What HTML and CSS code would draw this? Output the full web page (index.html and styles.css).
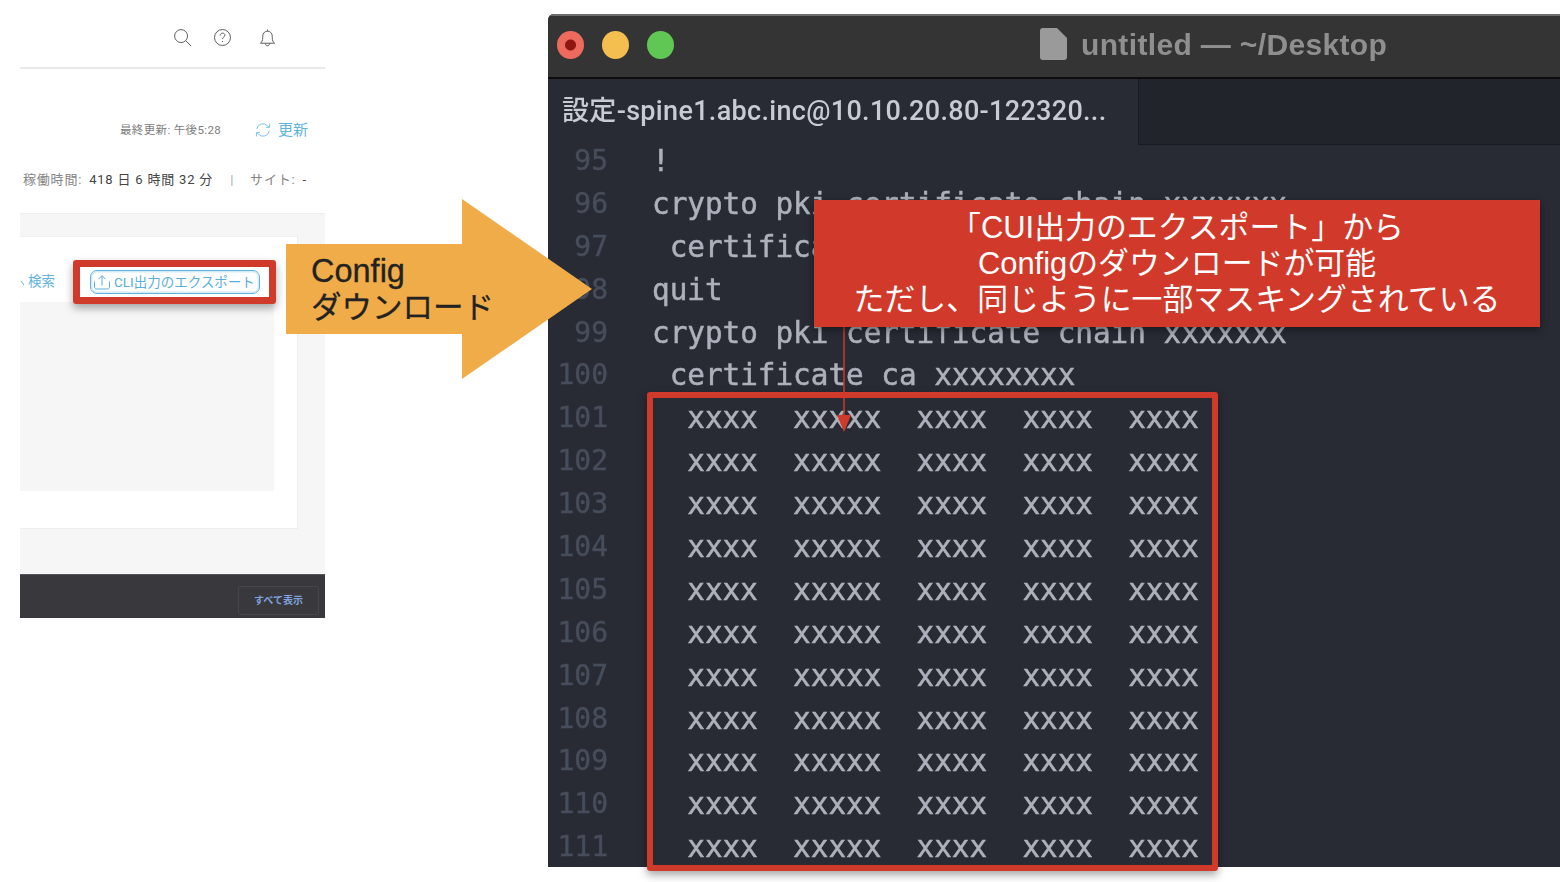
FILE: index.html
```html
<!DOCTYPE html>
<html lang="ja">
<head>
<meta charset="utf-8">
<title>Config ダウンロード</title>
<link rel="stylesheet" href="styles.css">
</head>
<body>
<main class="slide">
  <section class="panel">
    <header class="topbar">
      <svg class="ico ico-search" viewBox="0 0 20 20"><circle cx="8.5" cy="8.5" r="6.8"/><path d="M13.5 13.5 19 19"/></svg>
      <svg class="ico ico-help" viewBox="0 0 20 20"><circle cx="10" cy="10" r="8.4"/><path d="M7.6 8c0-1.6 1.1-2.6 2.5-2.6s2.4 1 2.4 2.2c0 1.9-2.5 2-2.5 4"/><path d="M10 13.6v1.2"/></svg>
      <svg class="ico ico-bell" viewBox="0 0 20 20"><path d="M2.5 15.5c1.7-1.4 2.5-3 2.5-5.6V8.2C5 5 7.2 2.8 10 2.8s5 2.2 5 5.4v1.7c0 2.6.8 4.2 2.5 5.6z"/><path d="M10 1v1.8M7.8 15.8c0 1.4 1 2.4 2.2 2.4s2.2-1 2.2-2.4"/></svg>
    </header>
    <div class="updated">
      <span class="updated-time">最終更新: 午後5:28</span>
      <span class="refresh">
        <svg class="ico-refresh" viewBox="0 0 18 18"><path d="M2 8a7 7 0 0 1 12.2-3.6L16 6"/><path d="M16.4 1.8V6h-4.2"/><path d="M16 10a7 7 0 0 1-12.2 3.6L2 12"/><path d="M1.6 16.2V12h4.2"/></svg>更新
      </span>
    </div>
    <div class="uptime">
      <span class="muted">稼働時間:</span><span class="val">418 日 6 時間 32 分</span><span class="sep">|</span><span class="muted">サイト:</span><span class="val">-</span>
    </div>
    <div class="content">
      <div class="card">
        <div class="toolbar">
          <span class="search"><svg class="ico-mini" viewBox="0 0 6 12"><path d="M0 6 3 10"/></svg>検索</span>
          <span class="export">
            <svg class="ico-upload" viewBox="0 0 18 18"><path d="M1.5 8.5v5.5c0 1.2.8 2 2 2h11c1.2 0 2-.8 2-2V8.5"/><path d="M9 12.5V3M5.5 6.2 9 2.6l3.5 3.6"/></svg>CLI出力のエクスポート
          </span>
        </div>
        <div class="card-body"></div>
      </div>
    </div>
    <footer class="bottom"><span class="show-all">すべて表示</span></footer>
  </section>

  <section class="terminal">
    <header class="titlebar">
      <span class="light red"></span><span class="light yellow"></span><span class="light green"></span>
      <div class="title">
        <svg class="doc" viewBox="0 0 27 32"><path d="M3 0h14l10 10v19a3 3 0 0 1-3 3H3a3 3 0 0 1-3-3V3a3 3 0 0 1 3-3z"/></svg>
        <span>untitled — ~/Desktop</span>
      </div>
    </header>
    <div class="tabs">
      <div class="tab">設定-spine1.abc.inc@10.10.20.80-122320...</div>
      <div class="tab-rest"></div>
    </div>
    <div class="editor">
      <div class="line"><span class="no">95</span><span class="code">!</span></div>
      <div class="line"><span class="no">96</span><span class="code">crypto pki certificate chain xxxxxxx</span></div>
      <div class="line"><span class="no">97</span><span class="code"> certificate ca xxxxxxxx</span></div>
      <div class="line"><span class="no">98</span><span class="code">quit</span></div>
      <div class="line"><span class="no">99</span><span class="code">crypto pki certificate chain xxxxxxx</span></div>
      <div class="line"><span class="no">100</span><span class="code"> certificate ca xxxxxxxx</span></div>
      <div class="line"><span class="no">101</span><span class="code">  xxxx  xxxxx  xxxx  xxxx  xxxx</span></div>
      <div class="line"><span class="no">102</span><span class="code">  xxxx  xxxxx  xxxx  xxxx  xxxx</span></div>
      <div class="line"><span class="no">103</span><span class="code">  xxxx  xxxxx  xxxx  xxxx  xxxx</span></div>
      <div class="line"><span class="no">104</span><span class="code">  xxxx  xxxxx  xxxx  xxxx  xxxx</span></div>
      <div class="line"><span class="no">105</span><span class="code">  xxxx  xxxxx  xxxx  xxxx  xxxx</span></div>
      <div class="line"><span class="no">106</span><span class="code">  xxxx  xxxxx  xxxx  xxxx  xxxx</span></div>
      <div class="line"><span class="no">107</span><span class="code">  xxxx  xxxxx  xxxx  xxxx  xxxx</span></div>
      <div class="line"><span class="no">108</span><span class="code">  xxxx  xxxxx  xxxx  xxxx  xxxx</span></div>
      <div class="line"><span class="no">109</span><span class="code">  xxxx  xxxxx  xxxx  xxxx  xxxx</span></div>
      <div class="line"><span class="no">110</span><span class="code">  xxxx  xxxxx  xxxx  xxxx  xxxx</span></div>
      <div class="line"><span class="no">111</span><span class="code">  xxxx  xxxxx  xxxx  xxxx  xxxx</span></div>
    </div>
  </section>

  <div class="hl hl-small"></div>
  <div class="hl hl-big"></div>

  <svg class="connector" viewBox="0 0 16 106"><path class="connector-line" d="M8 0V92"/><path class="connector-head" d="M1 88H15L8 105z"/></svg>

  <div class="arrow">
    <svg class="arrow-shape" viewBox="0 0 306 180"><path d="M0 45H176V0L306 90 176 180V135H0z"/></svg>
    <div class="arrow-text"><span class="arrow-latin">Config</span><br>ダウンロード</div>
  </div>

  <div class="callout">「CUI出力のエクスポート」から<br>Configのダウンロードが可能<br>ただし、同じように一部マスキングされている</div>
</main>
</body>
</html>
```

FILE: styles.css
```css
* { box-sizing: border-box; }
html, body { margin: 0; padding: 0; background: #fff; }
.slide {
  position: relative;
  width: 1560px;
  height: 882px;
  overflow: hidden;
  font-family: "Liberation Sans", "Noto Sans CJK JP", sans-serif;
}

/* left panel */
.panel {
  position: absolute;
  left: 20px;
  top: 0;
  width: 305px;
  height: 618px;
  display: flex;
  flex-direction: column;
  font-family: "Roboto", "Noto Sans CJK JP", sans-serif;
  color: #555;
}
.topbar {
  height: 69px;
  flex: none;
  border-bottom: 2px solid #e9e9e9;
  display: flex;
  align-items: flex-start;
  padding: 28px 0 0 153px;
}
.ico { fill: none; stroke: #555; stroke-width: 1; }
.ico-search { width: 19px; height: 19px; }
.ico-help { width: 19px; height: 19px; margin-left: 21px; }
.ico-bell { width: 19px; height: 20px; margin-left: 26px; }
.updated {
  height: 43px;
  margin-top: 50px;
  flex: none;
  display: flex;
  align-items: flex-start;
  padding-left: 100px;
  line-height: 22px;
}
.updated-time { font-size: 11.5px; color: #7d7d7d; letter-spacing: 0.35px; }
.refresh {
  display: flex;
  align-items: center;
  margin-left: 34px;
  font-size: 15px;
  color: #62b4dc;
  gap: 7px;
}
.ico-refresh { width: 16px; height: 16px; fill: none; stroke: #7cc2e4; stroke-width: 1.1; }
.uptime {
  flex: none;
  height: 51px;
  padding: 6px 0 0 3px;
  display: flex;
  font-size: 13px;
  line-height: 24px;
  letter-spacing: 0.8px;
}
.muted { color: #858585; }
.val { color: #444; margin-left: 7px; }
.sep { color: #aaa; margin: 0 16px 0 17px; }
.content {
  flex: 1;
  background: #f6f6f6;
  border-top: 1px solid #eee;
  padding: 22px 27px 0 0;
}
.card {
  height: 293px;
  background: #fff;
  border: 1px solid #eee;
  border-left: 0;
  padding-right: 23px;
}
.toolbar {
  height: 65px;
  display: flex;
  align-items: flex-start;
  padding-top: 34px;
  position: relative;
}
.search {
  display: flex;
  align-items: center;
  font-size: 13.5px;
  line-height: 20px;
  color: #62b4dc;
}
.ico-mini { width: 8px; height: 12px; fill: none; stroke: #62b4dc; stroke-width: 1; }
.export {
  display: flex;
  align-items: center;
  width: 170px;
  height: 24px;
  margin: -1px 0 0 35px;
  border: 1px solid #62b4dc;
  border-radius: 7px;
  box-shadow: inset 0 0 0 1.5px #d5ebf5;
  padding: 0 0 2px 2px;
  font-size: 13.5px;
  color: #5aaed8;
  white-space: nowrap;
}
.ico-upload { width: 18px; height: 18px; margin: 2px 3px 0 0; fill: none; stroke: #5aaed8; stroke-width: 1; flex: none; }
.card-body { height: 189px; background: #f6f6f6; }
.bottom {
  flex: none;
  height: 44px;
  background: #39383c;
  border-top: 1px solid #55555a;
  display: flex;
  justify-content: flex-end;
  padding: 11px 6px 0 0;
}
.show-all {
  width: 81px;
  height: 29px;
  border: 1px solid #45474d;
  border-radius: 3px;
  text-align: center;
  line-height: 27px;
  font-size: 10px;
  font-weight: 700;
  color: #7fa2dc;
}

/* terminal */
.terminal {
  position: absolute;
  left: 548px;
  top: 14px;
  width: 1012px;
  height: 853px;
  background: #282b34;
  border-top-left-radius: 6px;
  overflow: hidden;
  display: flex;
  flex-direction: column;
}
.titlebar {
  position: relative;
  flex: none;
  height: 65px;
  background: #343434;
  border-top: 2px solid #6e6e6e;
  border-bottom: 2px solid #0c0c0c;
  display: flex;
  align-items: center;
  padding: 0 0 3px 9px;
  gap: 18px;
}
.light { width: 27px; height: 28px; border-radius: 50%; flex: none; display: flex; }
.red { background: radial-gradient(circle, #8e1712 0 5px, #ec6a5e 6px); }
.yellow { background: #f4bf4f; }
.green { background: #60c654; }
.title {
  position: absolute;
  left: 492px;
  top: 11px;
  display: flex;
  align-items: center;
  gap: 14px;
  font-size: 30px;
  font-weight: 700;
  line-height: 34px;
  letter-spacing: 0.35px;
  color: #8f8f8f;
  filter: blur(0.6px);
}
.title span { position: relative; top: 1px; }
.doc { width: 27px; height: 32px; fill: #9a9a9a; }
.tabs { flex: none; height: 66px; display: flex; margin-bottom: -5px; }
.tab {
  width: 590px;
  padding: 15px 0 0 14px;
  font-family: "Roboto", "Noto Sans CJK JP", sans-serif;
  font-size: 27px;
  font-weight: 500;
  line-height: 34px;
  letter-spacing: 0.32px;
  color: #c8cbd2;
  white-space: nowrap;
  filter: blur(0.5px);
}
.tab-rest { flex: 1; background: #21242b; border-left: 1px solid #181a1f; border-bottom: 1px solid #181a1f; }
.editor {
  flex: 1;
  font-family: "DejaVu Sans Mono", monospace;
  filter: blur(0.7px);
}
.line { display: flex; height: 42.9px; line-height: 42.9px; white-space: pre; }
.no { width: 60px; text-align: right; font-size: 28px; color: #474d5b; flex: none; -webkit-text-stroke: 0.4px #474d5b; }
.code { margin-left: 44px; font-size: 29.3px; color: #adb1bc; -webkit-text-stroke: 0.5px #adb1bc; }

/* annotations */
.hl {
  position: absolute;
  border-style: solid;
  border-color: #cf3a2a;
  border-radius: 3px;
  box-shadow: 0 4px 8px rgba(0, 0, 0, 0.35);
}
.hl-small { left: 73px; top: 260px; width: 203px; height: 44px; border-width: 7px; }
.hl-big { left: 647px; top: 392px; width: 571px; height: 479px; border-width: 6px; }
.connector { position: absolute; left: 836px; top: 327px; width: 16px; height: 106px; overflow: visible; }
.connector-line { fill: none; stroke: #cf3a2a; stroke-width: 1.5; }
.connector-head { fill: #cf3a2a; }
.arrow { position: absolute; left: 286px; top: 199px; width: 306px; height: 180px; }
.arrow-shape { position: absolute; inset: 0; width: 100%; height: 100%; fill: #f0ac48; }
.arrow-text {
  position: relative;
  padding: 54px 0 0 25px;
  font-size: 30.5px;
  line-height: 36px;
  color: #222;
  -webkit-text-stroke: 0.3px #222;
}
.arrow-latin { font-size: 32.5px; }
.callout {
  position: absolute;
  left: 814px;
  top: 200px;
  width: 726px;
  height: 127px;
  padding-top: 10px;
  background: #d13a2b;
  box-shadow: 0 3px 8px rgba(0, 0, 0, 0.4);
  color: #fff;
  font-size: 30.9px;
  line-height: 36px;
  text-align: center;
}
```
